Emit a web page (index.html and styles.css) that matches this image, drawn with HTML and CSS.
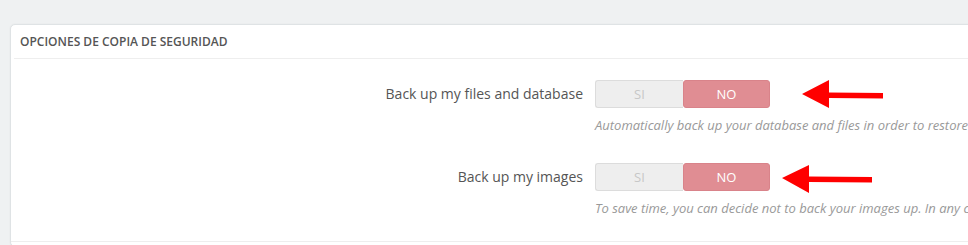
FILE: index.html
```html
<!DOCTYPE html>
<html lang="en">
<head>
    <meta charset="UTF-8">
    <meta name="viewport" content="width=device-width, initial-scale=1.0">
    <title>Opciones de copia de seguridad</title>
    <link rel="stylesheet" href="styles.css">
</head>
<body>

<div class="page">
    <div class="panel">
        <h3 class="panel-heading">Opciones de copia de seguridad</h3>

        <div class="form-body">
            <div class="form-group">
                <label class="control-label">Back up my files and database</label>
                <div class="control">
                    <div class="switch">
                        <span class="switch-off">SI</span>
                        <span class="switch-on">NO</span>
                    </div>
                    <p class="help-block">Automatically back up your database and files in order to restore your shop if needed. This is experimental: your backup's reliability is not guaranteed.</p>
                </div>
            </div>

            <div class="form-group">
                <label class="control-label">Back up my images</label>
                <div class="control">
                    <div class="switch">
                        <span class="switch-off">SI</span>
                        <span class="switch-on">NO</span>
                    </div>
                    <p class="help-block">To save time, you can decide not to back your images up. In any case, always make sure you have backed them up manually.</p>
                </div>
            </div>
        </div>

        <div class="panel-footer"></div>
    </div>

    <svg class="annotations" width="968" height="245" viewBox="0 0 968 245">
        <polygon points="802,94 829,80 829,92.5 883,93 883,98.5 829,98 829,108" fill="#ff0000"/>
        <polygon points="782,178 809,165 809,176.5 872,177 872,182.5 809,182 809,193" fill="#ff0000"/>
    </svg>
</div>

</body>
</html>
```

FILE: styles.css
```css
body {
    margin: 0;
    padding: 0;
    background-color: #eff1f2;
    font-family: "Open Sans", "Liberation Sans", sans-serif;
    color: #555;
    overflow: hidden;
}
.page {
    position: relative;
    width: 968px;
    height: 245px;
    padding: 24px 0 0 10px;
    box-sizing: border-box;
}
.panel {
    width: 1400px;
    background-color: white;
    border: 1px solid #dfe3e5;
    border-radius: 5px;
    box-shadow: 0 0 2px rgba(0, 0, 0, 0.06);
    padding: 0 3px;
}
.panel-heading {
    margin: 0;
    height: 33px;
    line-height: 34px;
    padding: 0 6px;
    font-size: 12px;
    font-weight: 600;
    text-transform: uppercase;
    color: #555;
    border-bottom: 1px solid #eeeeee;
}
.form-body {
    padding-top: 21px;
    padding-bottom: 24px;
}
.form-group {
    display: grid;
    grid-template-columns: 581px 1fr;
    margin-bottom: 29px;
}
.form-group:last-child {
    margin-bottom: 0;
}
.control-label {
    text-align: right;
    padding-right: 12px;
    font-size: 14px;
    line-height: 28px;
    color: #555;
}
.switch {
    display: flex;
    width: 175px;
    height: 28px;
    font-size: 13px;
    text-transform: uppercase;
}
.switch span {
    display: flex;
    align-items: center;
    justify-content: center;
    box-sizing: border-box;
}
.switch-off {
    width: 88px;
    background-color: #eeeeee;
    border: 1px solid #dcdcdc;
    border-right: none;
    border-radius: 3px 0 0 3px;
    color: #c7c7c7;
}
.switch-on {
    width: 87px;
    background-color: #e08d93;
    border: 1px solid #d9838a;
    border-radius: 3px;
    color: white;
}
.help-block {
    margin: 8px 0 0;
    font-size: 13px;
    line-height: 18px;
    font-style: italic;
    color: #999;
    white-space: nowrap;
}
.panel-footer {
    margin: 0 -3px;
    height: 4px;
    border-top: 1px solid #eeeeee;
}
.annotations {
    position: absolute;
    left: 0;
    top: 0;
}
```
